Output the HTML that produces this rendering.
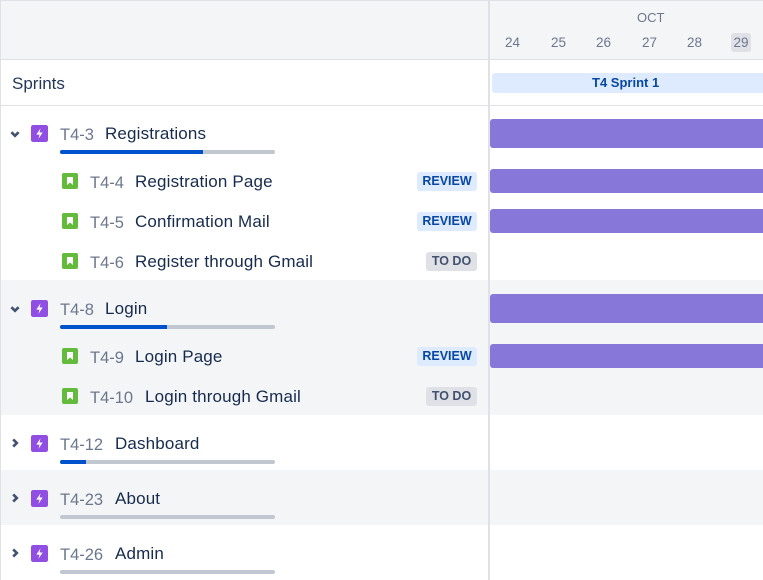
<!DOCTYPE html>
<html><head><meta charset="utf-8"><style>
*{margin:0;padding:0;box-sizing:border-box}
body{width:763px;height:580px;overflow:hidden;background:#fff;font-family:"Liberation Sans",sans-serif;position:relative}
.a{position:absolute}
.g{background:#f4f5f7}
.key{position:absolute;font-size:16.5px;color:#6b778c;line-height:20px}
.ttl{position:absolute;font-size:17px;letter-spacing:0.15px;color:#172b4d;line-height:20px}
.prog{position:absolute;left:60px;width:215px;height:4px;border-radius:2px;background:#c1c7d0;overflow:hidden}
.prog i{display:block;height:4px;background:#0052cc}
.bar{position:absolute;left:490px;right:0;background:#8777d9;border-radius:3px 0 0 3px}
.badge{position:absolute;height:19px;border-radius:3px;font-size:12.5px;font-weight:bold;line-height:19px;text-align:center}
.rv{left:417px;width:60px;background:#deebff;color:#0747a6}
.td{left:426px;width:51px;background:#dfe1e6;color:#42526e}
.ch{position:absolute;left:9px}
</style></head><body>
<div class="a g" style="left:0;top:0;width:763px;height:60px;border-bottom:1px solid #dfe1e6"></div>
<div class="a g" style="left:0;top:280px;width:763px;height:135px"></div>
<div class="a g" style="left:0;top:470px;width:763px;height:55px"></div>
<div class="a" style="left:0;top:105px;width:763px;height:1px;background:#dfe1e6"></div>
<div class="a" style="left:0;top:0;width:1px;height:580px;background:#dfe1e6"></div>
<div class="a" style="left:488px;top:0;width:2px;height:580px;background:#dfe1e6"></div>
<div class="a" style="left:0;top:0;width:763px;height:1px;background:#dfe1e6"></div>
<div class="a" style="left:12px;top:74px;font-size:17px;color:#253858">Sprints</div>
<div class="a" style="left:637px;top:10px;font-size:13px;color:#6b778c">OCT</div>
<div class="a" style="left:505px;top:35px;font-size:13.5px;color:#6b778c">24</div>
<div class="a" style="left:551px;top:35px;font-size:13.5px;color:#6b778c">25</div>
<div class="a" style="left:596px;top:35px;font-size:13.5px;color:#6b778c">26</div>
<div class="a" style="left:642px;top:35px;font-size:13.5px;color:#6b778c">27</div>
<div class="a" style="left:687px;top:35px;font-size:13.5px;color:#6b778c">28</div>
<div class="a" style="left:731px;top:33px;width:20px;height:19px;background:#dfe1e6;border-radius:3px;font-size:13.5px;color:#6b778c;text-align:center;line-height:19px">29</div>
<div class="a" style="left:492px;top:73px;right:0;height:20px;background:#deebff;border-radius:3px 0 0 3px;font-size:13px;font-weight:bold;color:#0747a6;line-height:20px;padding-left:100px">T4 Sprint 1</div>

<svg width="0" height="0" style="position:absolute"><defs>
<symbol id="ep" viewBox="0 0 16 16"><rect width="16" height="16" rx="2" fill="#904ee2"/><path d="M9 3L5 9h3l-1 4 4-6H8z" fill="#fff"/></symbol>
<symbol id="st" viewBox="0 0 16 16"><rect width="16" height="16" rx="2" fill="#63ba3c"/><path d="M5 4h6v8l-3-2.5L5 12z" fill="#fff"/></symbol>
<symbol id="dn" viewBox="0 0 10 10"><path d="M2 3.5l3 3 3-3" stroke="#42526e" stroke-width="2.2" fill="none"/></symbol>
<symbol id="rt" viewBox="0 0 10 10"><path d="M3.5 2l3 3-3 3" stroke="#42526e" stroke-width="2.2" fill="none"/></symbol>
</defs></svg>

<svg class="ch" style="top:128px" width="12" height="12"><use href="#dn"/></svg>
<svg class="a" style="left:31px;top:125px" width="17" height="17"><use href="#ep"/></svg>
<div class="key" style="left:60px;top:125px">T4-3</div><div class="ttl" style="left:105px;top:124px">Registrations</div>
<div class="prog" style="top:150px"><i style="width:143px"></i></div>
<div class="bar" style="top:119px;height:29px"></div>

<svg class="a" style="left:62px;top:173px" width="16" height="16"><use href="#st"/></svg>
<div class="key" style="left:90px;top:173px">T4-4</div><div class="ttl" style="left:135px;top:172px">Registration Page</div>
<div class="badge rv" style="top:172px">REVIEW</div>
<div class="bar" style="top:169px;height:24px"></div>

<svg class="a" style="left:62px;top:213px" width="16" height="16"><use href="#st"/></svg>
<div class="key" style="left:90px;top:213px">T4-5</div><div class="ttl" style="left:135px;top:212px">Confirmation Mail</div>
<div class="badge rv" style="top:212px">REVIEW</div>
<div class="bar" style="top:209px;height:24px"></div>

<svg class="a" style="left:62px;top:253px" width="16" height="16"><use href="#st"/></svg>
<div class="key" style="left:90px;top:253px">T4-6</div><div class="ttl" style="left:135px;top:252px">Register through Gmail</div>
<div class="badge td" style="top:252px">TO DO</div>

<svg class="ch" style="top:303px" width="12" height="12"><use href="#dn"/></svg>
<svg class="a" style="left:31px;top:300px" width="17" height="17"><use href="#ep"/></svg>
<div class="key" style="left:60px;top:300px">T4-8</div><div class="ttl" style="left:105px;top:299px">Login</div>
<div class="prog" style="top:325px"><i style="width:107px"></i></div>
<div class="bar" style="top:294px;height:29px"></div>

<svg class="a" style="left:62px;top:348px" width="16" height="16"><use href="#st"/></svg>
<div class="key" style="left:90px;top:348px">T4-9</div><div class="ttl" style="left:135px;top:347px">Login Page</div>
<div class="badge rv" style="top:347px">REVIEW</div>
<div class="bar" style="top:344px;height:24px"></div>

<svg class="a" style="left:62px;top:388px" width="16" height="16"><use href="#st"/></svg>
<div class="key" style="left:90px;top:388px">T4-10</div><div class="ttl" style="left:145px;top:387px">Login through Gmail</div>
<div class="badge td" style="top:387px">TO DO</div>

<svg class="ch" style="top:437px" width="12" height="12"><use href="#rt"/></svg>
<svg class="a" style="left:31px;top:435px" width="17" height="17"><use href="#ep"/></svg>
<div class="key" style="left:60px;top:435px">T4-12</div><div class="ttl" style="left:115px;top:434px">Dashboard</div>
<div class="prog" style="top:460px"><i style="width:26px"></i></div>

<svg class="ch" style="top:492px" width="12" height="12"><use href="#rt"/></svg>
<svg class="a" style="left:31px;top:490px" width="17" height="17"><use href="#ep"/></svg>
<div class="key" style="left:60px;top:490px">T4-23</div><div class="ttl" style="left:115px;top:489px">About</div>
<div class="prog" style="top:515px"></div>

<svg class="ch" style="top:547px" width="12" height="12"><use href="#rt"/></svg>
<svg class="a" style="left:31px;top:545px" width="17" height="17"><use href="#ep"/></svg>
<div class="key" style="left:60px;top:545px">T4-26</div><div class="ttl" style="left:115px;top:544px">Admin</div>
<div class="prog" style="top:570px"></div>
</body></html>
